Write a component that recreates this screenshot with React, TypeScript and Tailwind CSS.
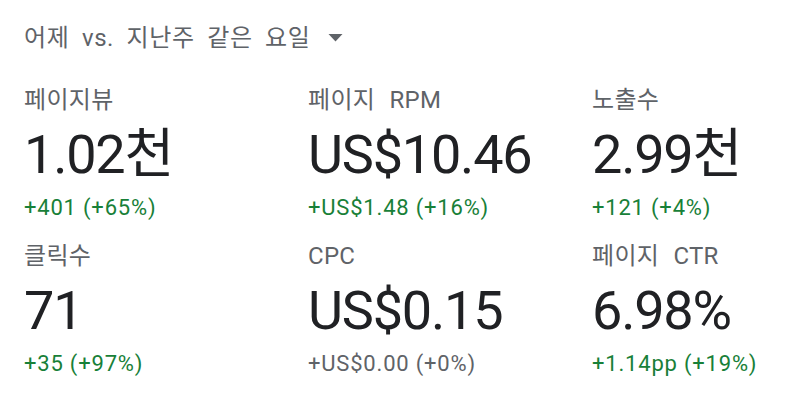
import { ReactNode } from "react"

interface Metric {
  label: string
  value: string
  change: string
  positive: boolean
}

const metrics: Metric[] = [
  { label: "페이지뷰", value: "1.02천", change: "+401 (+65%)", positive: true },
  { label: "페이지 RPM", value: "US$10.46", change: "+US$1.48 (+16%)", positive: true },
  { label: "노출수", value: "2.99천", change: "+121 (+4%)", positive: true },
  { label: "클릭수", value: "71", change: "+35 (+97%)", positive: true },
  { label: "CPC", value: "US$0.15", change: "+US$0.00 (+0%)", positive: false },
  { label: "페이지 CTR", value: "6.98%", change: "+1.14pp (+19%)", positive: true },
]

const font = { fontFamily: 'Roboto, "Noto Sans CJK KR", sans-serif' }

function Cell({ m }: { m: Metric }): ReactNode {
  return (
    <div className="flex flex-col">
      <div className="text-[24px] leading-[30px] tracking-[0.3px] [word-spacing:8px] text-[#5f6368]">
        {m.label}
      </div>
      <div className="mt-[10px] text-[54px] leading-[60px] tracking-[-1.2px] text-[#202124]">
        {m.value}
      </div>
      <div
        className={
          m.positive
            ? "mt-[10px] text-[22px] leading-[26px] tracking-[0.8px] text-[#188038]"
            : "mt-[10px] text-[22px] leading-[26px] tracking-[0.8px] text-[#5f6368]"
        }
      >
        {m.change}
      </div>
    </div>
  )
}

export default function App() {
  return (
    <div className="w-[808px] h-[408px] bg-white pl-6 pt-[22px]" style={font}>
      <div className="flex items-center gap-[18px]">
        <span className="text-[24px] leading-[32px] tracking-[0.6px] [word-spacing:6px] text-[#5f6368]">
          어제 vs. 지난주 같은 요일
        </span>
        <svg width="15" height="8" viewBox="0 0 15 8">
          <path d="M0.5 0h14L7.5 7.5z" fill="#5f6368" />
        </svg>
      </div>
      <div className="mt-[31px] grid grid-cols-[284px_284px_216px] gap-y-[20px]">
        {metrics.map((m) => (
          <Cell key={m.label} m={m} />
        ))}
      </div>
    </div>
  )
}
